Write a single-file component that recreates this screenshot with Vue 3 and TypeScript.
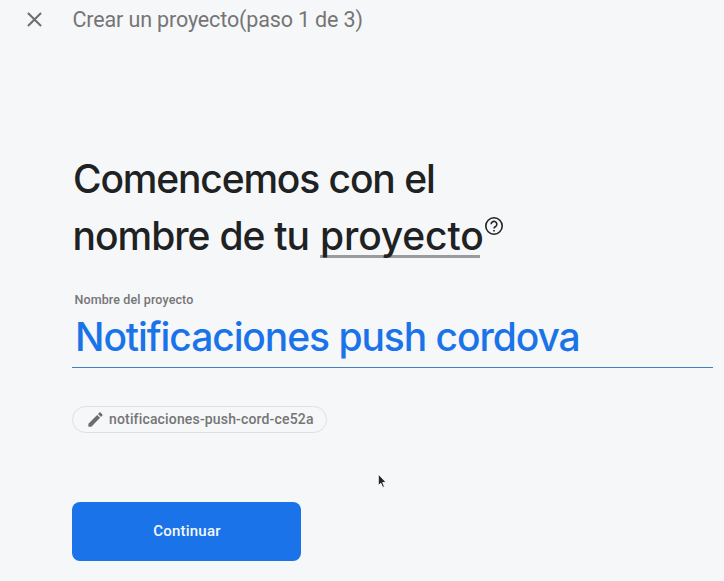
<script setup lang="ts">
import { ref } from 'vue'

const projectName = ref('Notificaciones push cordova')
const projectId = 'notificaciones-push-cord-ce52a'
</script>

<template>
  <main class="page">
    <header class="bar">
      <svg class="close" viewBox="0 0 24 24" role="button">
        <path d="M19 6.41 17.59 5 12 10.59 6.41 5 5 6.41 10.59 12 5 17.59 6.41 19 12 13.41 17.59 19 19 17.59 13.41 12z" />
      </svg>
      <span class="step">Crear un proyecto(paso 1 de 3)</span>
    </header>

    <h1 class="title">
      <span class="line first">Comencemos con el</span>
      <span class="line second"><span class="lead">nombre de tu</span><span class="term">proyecto</span><svg class="help" viewBox="0 0 20 20">
        <circle cx="10" cy="10" r="8.200" />
        <path d="M7.200 8.300a2.800 2.800 0 1 1 4.900 1.700C11.100 11 10 11.200 10 12.600" />
        <path d="M10 13.900v1.600" />
      </svg></span>
    </h1>

    <label class="field">
      <span class="label">Nombre del proyecto</span>
      <span class="value">{{ projectName }}</span>
    </label>

    <div class="chip">
      <svg class="pencil" viewBox="0 0 24 24">
        <path d="M3 17.250V21h3.750L17.810 9.940l-3.750-3.750L3 17.250zM20.710 7.040a1 1 0 0 0 0-1.410l-2.340-2.340a1 1 0 0 0-1.410 0l-1.830 1.830 3.750 3.750 1.830-1.830z" />
      </svg>
      <span class="chip-text">{{ projectId }}</span>
    </div>

    <button class="submit" type="button">Continuar</button>

    <svg class="cursor" viewBox="0 0 11 17">
      <path d="M1 1v12.500l2.700-2.600 2 4.400 2-.9-2-4.200h3.800z" />
    </svg>
  </main>
</template>

<style>
body {
  background: #f5f7f9;
}
</style>

<style scoped>
.page {
  position: relative;
  box-sizing: border-box;
  height: 581px;
  padding-left: 72px;
  overflow: hidden;
  background: #f5f7f9;
  font-family: Roboto, "Liberation Sans", sans-serif;
  color: #757575;
}
.bar {
  display: flex;
  align-items: center;
  height: 38px;
  margin-left: -50px;
}
.close {
  width: 25px;
  height: 25px;
  margin-right: 25.500px;
  fill: #6d6f71;
}
.step {
  padding-top: 2px;
  font-size: 21.500px;
  line-height: 38px;
  letter-spacing: -0.140px;
  white-space: nowrap;
}
.title {
  margin: 112px 0 0;
  color: #202122;
  font-family: Inter, "Open Sans", sans-serif;
  font-size: 39px;
  font-weight: 500;
  line-height: 58px;
}
.line {
  display: flex;
  height: 58px;
  white-space: nowrap;
}
.first {
  padding-left: 1px;
  letter-spacing: -1.170px;
  word-spacing: 0.300px;
}
.second {
  height: 57px;
  line-height: 55px;
}
.lead {
  width: 247.500px;
  padding-left: 0.500px;
  letter-spacing: -1px;
  word-spacing: 0.500px;
}
.term {
  height: 50px;
  width: 160px;
  box-sizing: border-box;
  border-bottom: 3px solid #999b9d;
  letter-spacing: -0.150px;
}
.help {
  width: 20px;
  height: 20px;
  margin: 8px 0 0 4px;
  fill: none;
  stroke: #202122;
  stroke-width: 1.600;
}
.field {
  display: block;
  width: 641px;
  height: 75px;
  margin-top: 27px;
  border-bottom: 1px solid #3f7fc4;
}
.label {
  display: block;
  padding-left: 2.500px;
  font-size: 12.500px;
  font-weight: 500;
  line-height: 15px;
  letter-spacing: 0.120px;
}
.value {
  display: block;
  padding-left: 3px;
  color: #1a73e8;
  font-family: Inter, "Open Sans", sans-serif;
  font-size: 39px;
  font-weight: 500;
  line-height: 59px;
  letter-spacing: -1.090px;
  word-spacing: 0.200px;
  white-space: nowrap;
}
.chip {
  display: flex;
  align-items: center;
  box-sizing: border-box;
  width: 255px;
  height: 27px;
  margin-top: 38px;
  padding-left: 13px;
  border: 1px solid #dddfe2;
  border-radius: 14px;
}
.pencil {
  width: 19px;
  height: 19px;
  margin-right: 4px;
  fill: #6d6d6d;
}
.chip-text {
  font-size: 14px;
  font-weight: 500;
  letter-spacing: 0.160px;
  line-height: 24px;
  padding-bottom: 1px;
  white-space: nowrap;
}
.submit {
  display: block;
  width: 229px;
  height: 59px;
  margin-top: 69px;
  padding: 0 0 0 1px;
  border: 0;
  border-radius: 8px;
  background: #1a73e8;
  color: #f4f8fe;
  font: 500 15px/59px Roboto, sans-serif;
  letter-spacing: 0.200px;
}
.cursor {
  position: absolute;
  top: 473px;
  left: 377px;
  width: 11px;
  height: 16px;
  fill: #25272b;
  stroke: #fff;
  stroke-width: 1;
}
</style>
